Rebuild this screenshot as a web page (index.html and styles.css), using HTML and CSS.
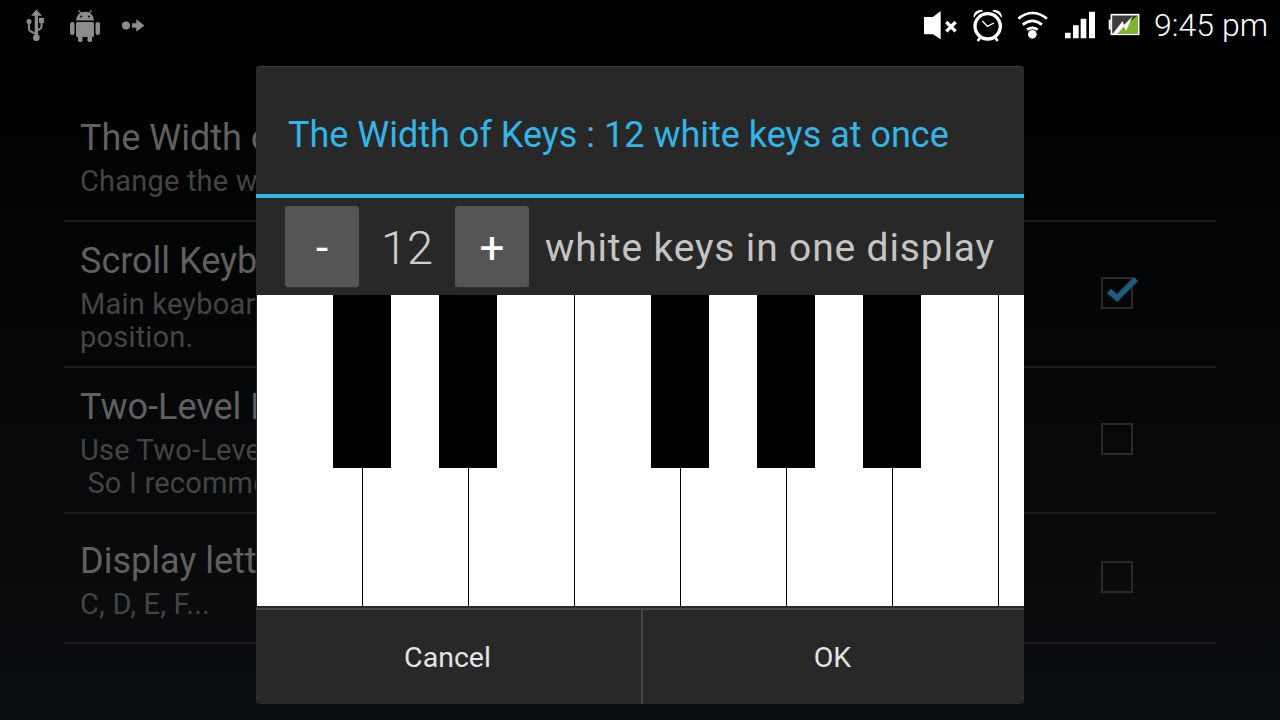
FILE: index.html
```html
<!DOCTYPE html>
<html lang="en">
<head>
<meta charset="utf-8">
<title>The Width of Keys</title>
<link rel="stylesheet" href="styles.css">
</head>
<body>
<div class="screen">
  <header class="statusbar">
    <div class="status-left">
      <svg class="ic" width="25" height="37" viewBox="70 20 75 110"><path d="M110 27l17 19h-12v60h-10V46H94z" fill="#8c8c8c"/><circle cx="110" cy="112" r="10" fill="#8c8c8c"/><circle cx="88" cy="63" r="7.500" fill="#8c8c8c"/><rect x="118" y="52" width="15" height="15" fill="#8c8c8c"/><path d="M88 63v22q0 6 6 8l16 8M125.500 60v18q0 6-6 8l-10 5" fill="none" stroke="#8c8c8c" stroke-width="6"/></svg>
      <svg class="ic ic-droid" width="30" height="32" viewBox="0 0 30 32"><path d="M6 10.500q.5-5 4-7.500L8 .800 9 0l2.200 2.400q3.800-1.300 7.600 0L21 0l1 .800-2 2.200q3.500 2.500 4 7.500z" fill="#8c8c8c"/><circle cx="11" cy="6.500" r="1" fill="#000"/><circle cx="19" cy="6.500" r="1" fill="#000"/><rect x="6" y="12" width="18" height="15" rx="1.500" fill="#8c8c8c"/><rect x="0" y="12" width="4.500" height="13" rx="2.200" fill="#8c8c8c"/><rect x="25.500" y="12" width="4.500" height="13" rx="2.200" fill="#8c8c8c"/><rect x="8" y="24" width="4.500" height="8" rx="1.800" fill="#8c8c8c"/><rect x="17.500" y="24" width="4.500" height="8" rx="1.800" fill="#8c8c8c"/></svg>
      <svg class="ic" width="25" height="17" viewBox="360 50 75 50"><circle cx="375" cy="75" r="12" fill="#8c8c8c"/><path d="M393 68h13V56l24 19-24 19V82h-13z" fill="#8c8c8c"/></svg>
    </div>
    <div class="status-right">
      <svg class="ic" width="33.300" height="28.300" viewBox="45 30 100 85"><path d="M45 48h27l23-18v85L72 100H45z" fill="#fff"/><path d="M112 63l28 28m0-28l-28 28" stroke="#fff" stroke-width="10" fill="none"/></svg>
      <svg class="ic ic-alarm" width="32" height="33.300" viewBox="190 28 96 100"><circle cx="237" cy="80" r="38" fill="none" stroke="#fff" stroke-width="10"/><path d="M194 50q2-20 26-20l3 5q-20 5-27 19zM280 50q-2-20-26-20l-3 5q20 5 27 19z" fill="#fff"/><path d="M221 64l15 16 20-10" fill="none" stroke="#fff" stroke-width="4"/><path d="M207 124l9-12M267 124l-9-12" stroke="#fff" stroke-width="8"/></svg>
      <svg class="ic ic-wifi" width="31.700" height="29.300" viewBox="325 30 95 88"><path d="M329 56q42-34 86 0M342 74q29-23 58 0M355 89q16-11 32 0" fill="none" stroke="#fff" stroke-width="8"/><circle cx="371" cy="103" r="13" fill="#fff"/></svg>
      <svg class="ic ic-signal" width="32" height="28" viewBox="465 35 96 84"><path d="M468 100h17v17h-17zM492 78h17v39h-17zM515 58h17v59h-17zM540 37h18v80h-18z" fill="#fff"/></svg>
      <svg class="ic ic-batt" width="32" height="23.300" viewBox="598 42 96 70"><path d="M600 62h6v30h-6z" fill="#fff"/><rect x="608" y="47" width="82" height="59" fill="#3a3f3a" stroke="#fff" stroke-width="5"/><path d="M688 49v55h-66z" fill="#7fb52e"/><path d="M612 104l30-38 4 12 26-26-20 44-6-13-20 21z" fill="#fff"/></svg>
      <span class="clock">9:45 pm</span>
    </div>
  </header>

  <main class="settings">
    <section class="row row-first">
      <div class="row-text">
        <h2>The Width of Keys</h2>
        <p>Change the width of keys.</p>
      </div>
    </section>
    <section class="row row-tall">
      <div class="row-text">
        <h2>Scroll Keyboard</h2>
        <p>Main keyboard moves to the touched<br>position.</p>
      </div>
      <span class="check"><svg class="tick" width="44" height="32" viewBox="0 0 44 32"><path d="M11 17l8 7L38 5" fill="none" stroke="#1b5d78" stroke-width="6"/></svg></span>
    </section>
    <section class="row row-tall row-two">
      <div class="row-text">
        <h2>Two-Level Keyboard</h2>
        <p>Use Two-Level keyboard layout.<br>&nbsp;So I recommend it for tablets.</p>
      </div>
      <span class="check"></span>
    </section>
    <section class="row row-last">
      <div class="row-text">
        <h2>Display letters</h2>
        <p>C, D, E, F...</p>
      </div>
      <span class="check"></span>
    </section>
  </main>

  <div class="dialog">
    <div class="dialog-title">The Width of Keys : 12 white keys at once</div>
    <div class="controls">
      <button class="step">-</button>
      <span class="count">12</span>
      <button class="step">+</button>
      <span class="label">white keys in one display</span>
    </div>
    <div class="piano">
      <div class="white"></div>
      <div class="white"></div>
      <div class="white"></div>
      <div class="white"></div>
      <div class="white"></div>
      <div class="white"></div>
      <div class="white"></div>
      <div class="white white-end"></div>
      <div class="black b1"></div>
      <div class="black b2"></div>
      <div class="black b3"></div>
      <div class="black b4"></div>
      <div class="black b5"></div>
    </div>
    <div class="actions">
      <button class="action action-cancel">Cancel</button>
      <button class="action">OK</button>
    </div>
  </div>
</div>
</body>
</html>
```
FILE: styles.css
```css
* { box-sizing: border-box; }
html, body { margin: 0; padding: 0; }
body { width: 1280px; height: 720px; overflow: hidden; background: #000; font-family: Roboto, "Liberation Sans", sans-serif; }
.screen { position: relative; width: 1280px; height: 720px; background: linear-gradient(#000 60px, #0b0e10 720px); }
.statusbar { height: 50px; background: #000; display: flex; justify-content: space-between; align-items: center; }
.ic { display: block; flex: none; }
.ic-droid { margin-top: 2px; }
.ic-alarm { margin: 2px 0 0 15px; }
.ic-wifi { margin-left: 13px; }
.ic-signal { margin-left: 15px; }
.ic-batt { margin-left: 12px; }
.status-left { display: flex; align-items: center; gap: 21.500px; padding-left: 23px; }
.status-right { display: flex; align-items: center; padding-right: 12px; }
.clock { color: #fff; font-size: 32px; font-weight: 300; margin-left: 14px; white-space: nowrap; }
.settings { margin: 0 64px; }
.row { display: flex; align-items: center; justify-content: space-between; border-bottom: 2px solid #1a1c1e; padding: 0 83px 0 16px; }
.row-first { height: 172px; }
.row-first .row-text { padding-top: 44px; }
.row-tall { height: 146px; }
.row-tall .row-text { padding-top: 5px; }
.row-two .row-text { padding-top: 4px; }
.row-last { height: 130px; }
.row-last .row-text { padding-top: 3px; }
.row h2 { margin: 0; font-size: 36px; font-weight: 400; line-height: 44px; color: #606060; }
.row p { margin: 5px 0 0; font-size: 29px; letter-spacing: .2px; line-height: 33px; color: #444; }
.check { position: relative; width: 32px; height: 32px; margin-top: -2px; border: 2px solid #2a2a2a; }
.tick { position: absolute; left: -5px; top: -5px; }
.dialog { position: absolute; left: 256px; top: 66px; width: 768px; height: 638px; background: #282828; border-radius: 4px; border-top: 1px solid #3c3c3c; display: flex; flex-direction: column; }
.dialog-title { height: 127px; padding: 46px 32px 0; font-size: 36px; line-height: 44px; color: #33b5e5; white-space: nowrap; }
.controls { height: 101px; border-top: 4px solid #33b5e5; display: flex; align-items: center; padding-left: 29px; }
.step { width: 74px; height: 81px; border: 0; border-radius: 3px; background: #555; color: #fff; font-family: inherit; font-size: 44px; padding: 2px 0 0; box-shadow: 0 1px 1px #333; }
.count { width: 96px; margin-top: 2px; text-align: center; color: #cfcfcf; font-size: 47px; font-weight: 300; }
.label { margin: 2px 0 0 16px; color: #c4c4c4; font-size: 39px; letter-spacing: .85px; white-space: nowrap; }
.piano { position: relative; height: 311px; margin-left: 1px; display: flex; background: #fff; overflow: hidden; }
.white { flex: none; width: 106px; border-right: 1px solid #000; }
.white-end { width: 25px; border: 0; }
.black { position: absolute; top: 0; width: 58px; height: 173px; background: #000; }
.b1 { left: 76px; }
.b2 { left: 182px; }
.b3 { left: 394px; }
.b4 { left: 500px; }
.b5 { left: 606px; }
.actions { flex: 1; display: flex; margin-top: 2px; border-top: 2px solid #464646; }
.action { flex: 1; border: 0; background: transparent; color: #e4e4e4; font-family: inherit; font-size: 28.500px; padding: 0 2px 0 0; }
.action-cancel { flex: none; width: 387px; border-right: 2px solid #464646; }
```
